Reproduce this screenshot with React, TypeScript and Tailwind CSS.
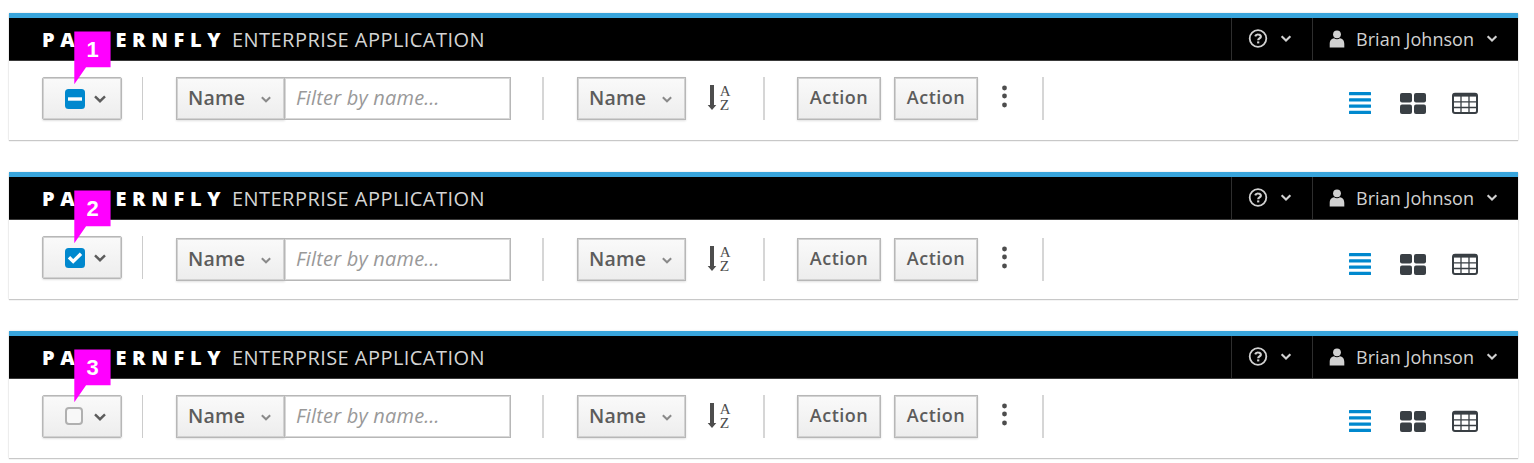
import React from "react";

type Selection = "partial" | "all" | "none";

const BTN =
  "h-[43px] shrink-0 border border-[#b7b7b7] bg-linear-to-b from-[#fafafa] to-[#ededed] text-[#5c5c5c] shadow-[inset_0_0_0_1px_#d2d2d2,0_1px_2px_rgba(0,0,0,0.12)]";

function Chevron({ className }: { className: string }) {
  return (
    <svg viewBox="0 0 12 8" className={className} fill="none" stroke="currentColor" strokeWidth="2.4">
      <path d="M1 1.3 6 6.2 11 1.3" />
    </svg>
  );
}

function Checkbox({ state }: { state: Selection }) {
  if (state === "none") {
    return <span className="-mt-[2px] mr-[2px] size-[18px] rounded-[4px] border-2 border-[#b0b0b0] bg-[#f8f8f8]" />;
  }
  return (
    <svg viewBox="0 0 20 20" className="size-5" fill="none">
      <rect width="20" height="20" rx="3.5" fill="#0088ce" />
      {state === "partial" ? (
        <path d="M3 10H17" stroke="#fff" strokeWidth="3.4" />
      ) : (
        <path d="M4 9.3 8.2 13.4 16 5.8" stroke="#fff" strokeWidth="3.4" />
      )}
    </svg>
  );
}

function Callout({ label }: { label: number }) {
  return (
    <div className="absolute left-[65px] top-[18px] h-[54px] w-[37px]">
      <svg viewBox="0 0 37 54" className="absolute inset-0 size-full">
        <path d="M0 0H37V36.500H12L0 54Z" fill="#f0f" transform="translate(0.3 0.4) scale(0.98)" />
      </svg>
      <span className="relative block h-[36px] text-center font-['Liberation_Sans',sans-serif] text-[22px] font-bold leading-[38px] text-white">
        {label}
      </span>
    </div>
  );
}

function Masthead() {
  return (
    <header className="flex h-12 border-t-[5px] border-b border-t-[#39a5dc] border-b-[#3a3a3a] bg-black pl-[33px] text-[#d1d1d1]">
      <div className="flex flex-1 items-center whitespace-nowrap text-[20px] leading-[22px]">
        <span className="w-[190px] pt-px text-[20px] font-extrabold tracking-[5.65px] text-white">PATTERNFLY</span>
        <span className="pt-px font-normal tracking-[0.45px] text-[#d4d4d4]">ENTERPRISE APPLICATION</span>
      </div>
      <div className="flex w-[81px] border-l border-[#2e2e2e] pl-4">
        <svg viewBox="0 0 20 20" className="mt-[11px] size-5" fill="none" stroke="currentColor" strokeWidth="1.8">
          <circle cx="10" cy="9.500" r="8.300" />
          <path d="M7.200 7.300C7.700 5.800 9 5.400 10.200 5.500 12 5.600 13 6.600 12.800 7.900 12.600 9.400 10.200 9.500 10.200 11.200" strokeWidth="2.200" />
          <path d="M10.200 12.400V14.400" strokeWidth="2.200" />
        </svg>
        <Chevron className="ml-3 mt-[17px] h-[7px] w-[12px]" />
      </div>
      <div className="flex w-[206px] border-l border-[#2e2e2e] pl-[16px]">
        <svg viewBox="0 0 16 18" className="mt-3 h-[18px] w-4" fill="currentColor">
          <circle cx="8" cy="4.300" r="3.900" />
          <path d="M.7 17.500V14C.7 10.300 2.900 8.500 5 8.300 6.800 9.500 9.200 9.500 11 8.300 13.200 8.500 15.300 10.300 15.300 14V17.500Z" />
        </svg>
        <span className="ml-[11px] mt-[9px] w-[130px] whitespace-nowrap text-[18px] font-medium leading-6 tracking-[0.05px]">Brian Johnson</span>
        <Chevron className="mt-[17px] h-[7px] w-[12px]" />
      </div>
    </header>
  );
}

function NameSelect() {
  return (
    <button className={`${BTN} flex w-[109px] items-center justify-between pl-[11px] pr-[13px] text-[19.5px]`}>
      <span className="-mt-px font-semibold tracking-[0.2px]">Name</span>
      <Chevron className="mt-[2px] h-[7px] w-[10px] text-[#8a8a8a]" />
    </button>
  );
}

function Divider() {
  return <div className="h-[43px] w-[2px] shrink-0 bg-[#d6d6d6]" />;
}

function SortIcon() {
  return (
    <svg viewBox="0 0 24 29" className="ml-[21px] mt-[6px] h-[29px] w-6 shrink-0" fill="#4d4d4d">
      <path d="M3 2H7V22H9.300L5 27 .7 22H3Z" />
      <text x="12.800" y="13" fontSize="15" fontFamily="Liberation Serif, serif">A</text>
      <text x="12.800" y="26.800" fontSize="15.500" fontFamily="Liberation Serif, serif">Z</text>
    </svg>
  );
}

function Views() {
  return (
    <div className="ml-auto mr-10 mt-[14px] flex h-6 text-[#393f44]">
      <svg viewBox="0 0 22 24" className="h-6 w-[22px]" fill="#0088ce">
        <rect y="1" width="22" height="3.300" rx=".5" />
        <rect y="7.300" width="22" height="3.300" rx=".5" />
        <rect y="13.400" width="22" height="3.300" rx=".5" />
        <rect y="19.700" width="22" height="3.300" rx=".5" />
      </svg>
      <svg viewBox="0 0 26 24" className="ml-[29px] h-6 w-[26px]" fill="currentColor">
        <rect y="2" width="12" height="9.500" rx="2" />
        <rect x="14" y="2" width="12" height="9.500" rx="2" />
        <rect y="13.500" width="12" height="9.500" rx="2" />
        <rect x="14" y="13.500" width="12" height="9.500" rx="2" />
      </svg>
      <svg viewBox="0 0 26 24" className="ml-[26px] h-6 w-[26px]" fill="none" stroke="currentColor">
        <rect x="1" y="2.800" width="24" height="19.300" rx="2" strokeWidth="2" />
        <path d="M1 4.200H25" strokeWidth="2.800" />
        <path d="M1 10.800H25M1 16.500H25M9 4V22M17 4V22" strokeWidth="1.300" />
      </svg>
    </div>
  );
}

function Toolbar({ state }: { state: Selection }) {
  return (
    <div className="flex items-start pl-[33px] pt-[16px]">
      <button className={`${BTN} flex w-20 items-center rounded-[2px] pl-[22px]`}>
        <Checkbox state={state} />
        <Chevron className="ml-[9px] h-[8px] w-[12px]" />
      </button>
      <div className="ml-5 h-[43px] w-px shrink-0 bg-[#ccc]" />
      <div className={`flex flex-1 items-start ${state === "all" ? "mt-[2px]" : ""}`}>
        <div className="ml-[33px] flex">
          <NameSelect />
          <input
            placeholder="Filter by name…"
            aria-label="Filter by name"
            className="-ml-px h-[43px] w-[227px] border border-[#b7b7b7] bg-white pb-[3px] pl-[11px] text-[20px] tracking-[0.2px] text-[#333] shadow-[inset_0_0_0_1px_#d8d8d8] outline-none placeholder:italic placeholder:text-[#999]"
          />
        </div>
        <div className="ml-[31px]"><Divider /></div>
        <div className="ml-[33px]"><NameSelect /></div>
        <SortIcon />
        <div className="ml-[32px]"><Divider /></div>
        <button className={`${BTN} ml-8 w-[84px] pb-[2px] text-[18px] font-semibold tracking-[0.5px]`}>Action</button>
        <button className={`${BTN} ml-[13px] w-[84px] pb-[2px] text-[18px] font-semibold tracking-[0.5px]`}>Action</button>
        <svg viewBox="0 0 6 24" className="ml-[23px] mt-2 h-6 w-[6px]" fill="#4d4d4d">
          <circle cx="3.500" cy="3" r="2.400" />
          <circle cx="3.500" cy="11" r="2.400" />
          <circle cx="3.500" cy="20" r="2.400" />
        </svg>
        <div className="ml-[35px]"><Divider /></div>
        <Views />
      </div>
    </div>
  );
}

function Panel({ index, state }: { index: number; state: Selection }) {
  return (
    <section className="relative h-[127px] w-[1509px] bg-white shadow-[0_1px_1px_#c8c8c8,0_0_2px_#ddd]">
      <Masthead />
      <Toolbar state={state} />
      <Callout label={index} />
    </section>
  );
}

export default function App() {
  const states: Selection[] = ["partial", "all", "none"];
  return (
    <main className="flex h-[463px] w-[1534px] flex-col gap-8 overflow-hidden bg-white pl-[9px] pt-[13px] font-['Open_Sans',sans-serif]">
      {states.map((s, i) => (
        <Panel key={s} index={i + 1} state={s} />
      ))}
    </main>
  );
}
